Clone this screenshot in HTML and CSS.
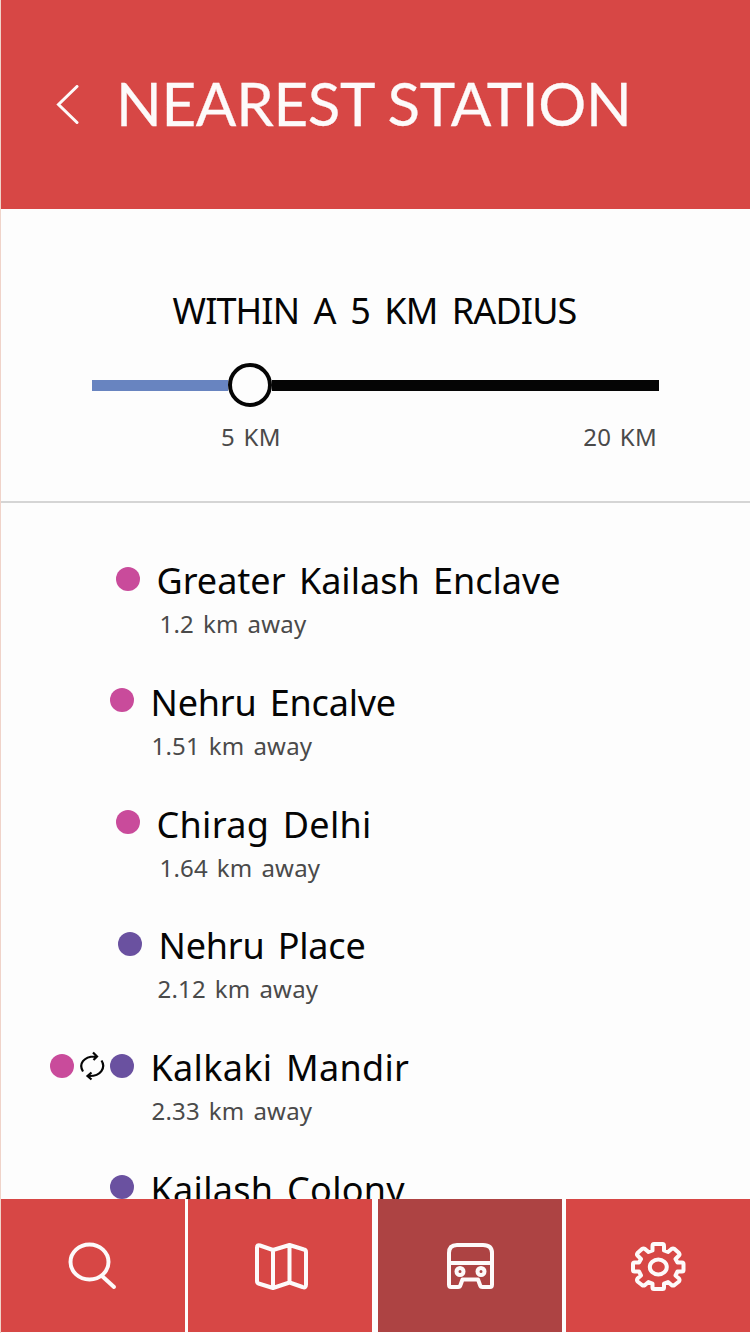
FILE: index.html
```
<!DOCTYPE html>
<html lang="en">
<head>
  <meta charset="UTF-8">
  <meta name="viewport" content="width=device-width, initial-scale=1.0">
  <title>Nearest Station</title>
  <link rel="stylesheet" href="styles.css">
</head>
<body>
  <div class="app">
    <!-- Header -->
    <header class="header">
      <svg class="back" width="24" height="40" viewBox="0 0 24 40">
        <path d="M21 1.500L2.500 19.500L21 37.500"/>
      </svg>
      <h1>NEAREST STATION</h1>
    </header>

    <!-- Radius slider -->
    <section class="radius">
      <h2>WITHIN A 5 KM RADIUS</h2>
      <div class="slider">
        <div class="track done"></div>
        <div class="knob"></div>
        <div class="track"></div>
      </div>
      <div class="labels">
        <span>5 KM</span>
        <span>20 KM</span>
      </div>
    </section>

    <!-- Stations -->
    <ul class="stations">
      <li class="station shift">
        <div class="lines"><span class="dot pink"></span></div>
        <div class="info">
          <h3>Greater Kailash Enclave</h3>
          <p class="indent">1.2 km away</p>
        </div>
      </li>
      <li class="station">
        <div class="lines"><span class="dot pink"></span></div>
        <div class="info">
          <h3 class="tight">Nehru Encalve</h3>
          <p>1.51 km away</p>
        </div>
      </li>
      <li class="station shift">
        <div class="lines"><span class="dot pink"></span></div>
        <div class="info">
          <h3 class="loose">Chirag Delhi</h3>
          <p class="indent">1.64 km away</p>
        </div>
      </li>
      <li class="station shift-more">
        <div class="lines"><span class="dot violet"></span></div>
        <div class="info">
          <h3 class="tight">Nehru Place</h3>
          <p class="outdent">2.12 km away</p>
        </div>
      </li>
      <li class="station">
        <div class="lines">
          <span class="dot pink"></span>
          <svg class="change" width="26" height="30" viewBox="0 0 26 30">
            <path d="M4 20.500C-0.500 13.500 4 5 17 5.500M14 1.500L18 5.500L14.500 9"/>
            <path d="M22.500 9.500C27 16.500 22 25.500 9.500 25M12.500 21.500L8.500 25L12.500 28.500"/>
          </svg>
          <span class="dot violet"></span>
        </div>
        <div class="info">
          <h3 class="loose">Kalkaki Mandir</h3>
          <p>2.33 km away</p>
        </div>
      </li>
      <li class="station">
        <div class="lines"><span class="dot violet"></span></div>
        <div class="info">
          <h3 class="loose">Kailash Colony</h3>
        </div>
      </li>
    </ul>

    <!-- Bottom tabs -->
    <nav class="tabs">
      <a class="tab">
        <svg width="60" height="60" viewBox="0 0 60 60">
          <ellipse cx="26.500" cy="26" rx="19" ry="17.500"/>
          <path d="M39.500 40.500L51 51"/>
        </svg>
      </a>
      <a class="tab">
        <svg width="60" height="60" viewBox="0 0 60 60">
          <path d="M7 11.500Q7 8.500 10 9.500L23 14L39.500 9L54 13.500Q56 14 56 16V48.500Q56 52.500 52.500 51L39.500 46.500L23 52L8.500 47.500Q7 47 7 45ZM23 14V51M39.500 9V46"/>
        </svg>
      </a>
      <a class="tab active">
        <svg width="60" height="60" viewBox="0 0 60 60">
          <path d="M9 17Q9 9 17 9H43Q52 9 52 17V48.500Q52 51 50 51H42.500Q40.500 51 40 49L38 43.500H22.500L20.500 49Q20 51 18 51H11Q9 51 9 48.500ZM9 27H52"/>
          <circle cx="20" cy="35.500" r="3.500"/>
          <circle cx="41" cy="35.500" r="3.500"/>
        </svg>
      </a>
      <a class="tab">
        <svg width="60" height="60" viewBox="0 0 60 60">
          <path d="M24.500 10Q24.500 8 26 8H34.500Q36 8 36 10V14.500L40 16L43.500 13Q45 12 46.500 13L51 17Q52 18.500 51 19.500L47.500 23L49.500 26.500H54Q55.500 26.500 55.500 28V34Q55.500 35.500 54 35.500H49.500L47.500 39.500L51 42.500Q52 44 51 45.500L46.500 49Q45 50 43.500 49L40 46L36 47.500V51.500Q36 53 34.500 53H26Q24.500 53 24.500 51.500V47.500L20.500 46L17 49Q15.500 50 14 49L9.500 45.500Q8.500 44 9.500 42.500L13 39.500L11 35.500H6.500Q5 35.500 5 34V28Q5 26.500 6.500 26.500H11L13 23L9.500 19.500Q8.500 18.500 9.500 17L14 13Q15.500 12 17 13L20.500 16L24.500 14.500Z"/>
          <ellipse cx="30.300" cy="31" rx="8.500" ry="7.500"/>
        </svg>
      </a>
    </nav>
  </div>
</body>
</html>
```
FILE: styles.css
```
/* General styles */
* {
  box-sizing: border-box;
}

body {
  font-family: "Noto Sans", "Lucida Grande", sans-serif;
  margin: 0;
  background-color: #fdfdfd;
  color: #050505;
}

h1, h2, h3, p, ul {
  margin: 0;
  padding: 0;
  font-weight: 400;
  white-space: nowrap;
}

svg {
  display: block;
  fill: none;
}

.app {
  height: 1333px;
  display: flex;
  flex-direction: column;
  overflow: hidden;
  border-left: 1px solid #f0d3c9;
}

/* Header */
.header {
  height: 209px;
  flex: none;
  display: flex;
  align-items: center;
  padding-left: 55px;
  background-color: #d74745;
}

.back {
  stroke: #fdfafa;
  stroke-width: 3;
  stroke-linecap: round;
}

.header h1 {
  margin-left: 36px;
  padding-bottom: 4px;
  font-family: Lato, sans-serif;
  font-size: 60px;
  line-height: 72px;
  letter-spacing: -0.3px;
  word-spacing: -1px;
  -webkit-text-stroke: 0.3px #fdfafa;
  color: #fdfafa;
}

/* Radius slider */
.radius {
  height: 294px;
  flex: none;
  padding-top: 77px;
  border-bottom: 2px solid #d5d5d5;
}

.radius h2 {
  padding-right: 2px;
  text-align: center;
  font-size: 36px;
  line-height: 50px;
  letter-spacing: -0.9px;
  word-spacing: 6px;
}

.slider {
  display: flex;
  align-items: center;
  height: 44px;
  margin: 27px 91px 0 91px;
}

.track {
  flex: 1;
  height: 11px;
  background-color: #050505;
}

.track.done {
  flex: none;
  width: 136px;
  margin-top: 1px;
  background-color: #6884c0;
}

.knob {
  width: 44px;
  height: 44px;
  border: 4px solid #050505;
  border-radius: 50%;
}

.labels {
  display: flex;
  justify-content: space-between;
  padding: 13px 93px 0 220px;
  font-size: 24px;
  line-height: 34px;
  letter-spacing: 0.3px;
  word-spacing: 2px;
  color: #4a4a4a;
}

/* Stations */
.stations {
  flex: 1;
  min-height: 0;
  overflow: hidden;
  padding-top: 51px;
  list-style: none;
}

.station {
  display: flex;
  height: 121.800px;
}

.station.shift {
  padding-left: 6px;
}

.station.shift-more {
  padding-left: 8px;
}

.lines {
  width: 132.500px;
  height: 49px;
  flex: none;
  display: flex;
  justify-content: flex-end;
  align-items: center;
}

.dot {
  width: 24px;
  height: 24px;
  border-radius: 50%;
}

.dot.pink {
  background-color: #c94b9b;
}

.dot.violet {
  background-color: #6a51a0;
}

.change {
  margin: 0 5px;
  stroke: #050505;
  stroke-width: 2.200;
}

.info {
  padding-left: 17px;
}

.info h3 {
  font-size: 36px;
  line-height: 54px;
  word-spacing: 4px;
}

.info .tight {
  letter-spacing: -0.2px;
}

.info .loose {
  letter-spacing: 0.3px;
}

.info p {
  margin-top: -1px;
  padding-left: 1px;
  font-size: 24px;
  line-height: 34px;
  letter-spacing: 0.2px;
  word-spacing: 2.500px;
  color: #4a4a4a;
}

.info .indent {
  padding-left: 3px;
}

.info .outdent {
  margin-left: -2px;
}

/* Bottom tabs */
.tabs {
  flex: none;
  display: flex;
  height: 134px;
  padding-bottom: 1px;
}

.tab {
  width: 184px;
  margin-right: 3px;
  display: flex;
  align-items: center;
  justify-content: center;
  background-color: #d74745;
}

.tab.active {
  margin: 0 4px 0 3px;
  background-color: #ad4343;
}

.tab:last-child {
  flex: 1;
  margin-right: 0;
}

.tab svg {
  stroke: #fdfafa;
  stroke-width: 4;
  stroke-linejoin: round;
  stroke-linecap: round;
}
```
